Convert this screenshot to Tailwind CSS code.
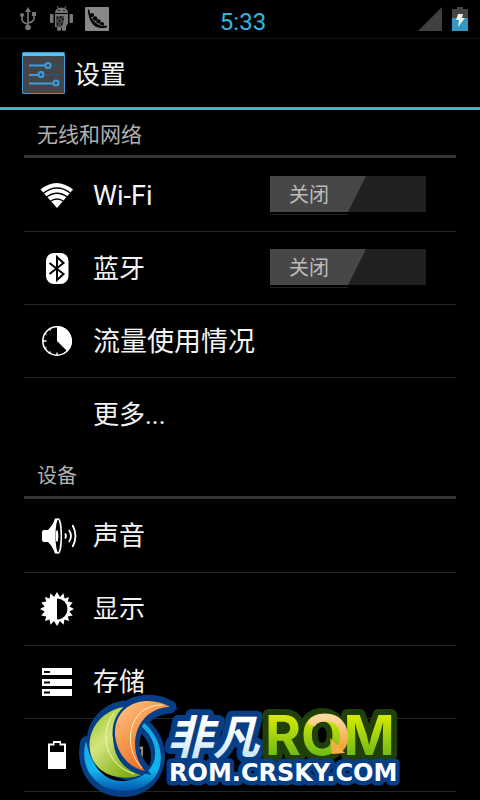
<!DOCTYPE html>
<html lang="zh-CN">
<head>
    <meta charset="UTF-8">
    <meta name="viewport" content="width=device-width, initial-scale=1.0">
    <title>设置</title>
    <script src="https://cdn.jsdelivr.net/npm/@tailwindcss/browser@4"></script>
</head>
<body class="bg-black text-[#f3f3f3] font-['Roboto','Noto_Sans_CJK_SC',sans-serif] overflow-hidden">
    <div class="relative h-screen overflow-hidden">
        <!-- Status bar -->
        <div class="relative flex h-[39px] items-center justify-between border-b border-[#111] pl-[18px] pr-3">
            <div class="flex items-center gap-3">
                <svg class="h-6 w-5" viewBox="0 0 20 24" fill="none" stroke="#777" stroke-width="1.6">
                    <path d="M10 3v17M10 17q-6-1-6-5V8M10 16q6-1 6-5V7"/>
                    <path d="M10 0l3 5H7z" fill="#777" stroke="none"/>
                    <circle cx="10" cy="20.500" r="2.800" fill="#777" stroke="none"/>
                    <circle cx="4" cy="8" r="2" fill="#777" stroke="none"/>
                    <path d="M14 5h4v4h-4z" fill="#777" stroke="none"/>
                </svg>
                <svg class="h-[26px] w-[23px]" viewBox="0 0 23 26" fill="#777">
                    <path d="M5 7a6.500 5.500 0 0 1 13 0z"/>
                    <path d="M7 0l2 3M16 0l-2 3" stroke="#777"/>
                    <rect x="0" y="8" width="3.500" height="9" rx="1"/>
                    <rect x="19.500" y="8" width="3.500" height="9" rx="1"/>
                    <path d="M5 8h13v9l-2 4v3q-2 2-4 0v-2h-1v2q-2 2-4 0v-3H5z"/>
                    <path d="M6 10h8v5l-2 6H7l-1-2z" fill="#444"/>
                    <path d="M7 11h1.500v2H7zM10 10h1.500v2H10zM9 14h1.500v2H9zM12 12h1.500v2H12zM11 17h1.500v2H11zM7 17h1.500v2H7z" fill="#111"/>
                    <circle cx="9" cy="4.500" r="0.800" fill="#000"/>
                    <circle cx="14" cy="4.500" r="0.800" fill="#000"/>
                </svg>
                <svg class="h-6 w-6" viewBox="0 0 24 24">
                    <rect width="24" height="24" rx="1" fill="#8a878a"/>
                    <path d="M3.500 2.500C2.500 12 8 21 16 21Q20 21.500 22 19.500Q17 20 12 17Q6 12 3.500 2.500z" fill="#000"/>
                    <path d="M3.500 2.500Q4 10 10 15.500Q15 20 22 19.500" fill="none" stroke="#000" stroke-width="1.500"/>
                    <circle cx="7" cy="8" r="2" fill="#000"/>
                    <circle cx="10" cy="11.500" r="2.300" fill="#000"/>
                    <circle cx="13.500" cy="14.500" r="2.300" fill="#000"/>
                    <circle cx="17" cy="17" r="2" fill="#000"/>
                    <path d="M6 10q4 7 12 9" fill="none" stroke="#8a878a" stroke-width="0.700"/>
                </svg>
            </div>
            <time class="absolute inset-x-0 top-[7px] pl-[6px] text-center text-[24px] leading-[30px] text-[#33b5e5]">5:33</time>
            <div class="flex items-center gap-[10px]">
                <svg class="h-6 w-6" viewBox="0 0 24 24"><path d="M24 0v24H0z" fill="#404040"/></svg>
                <svg class="h-6 w-4" viewBox="0 0 16 24">
                    <path d="M5 0h6v2h5v10H0V2h5z" fill="#444"/>
                    <path d="M0 11h16v13H0z" fill="#3397bf"/>
                    <path d="M6 7h5l-1 4h3l-7 9 1-7H4z" fill="#eee"/>
                </svg>
            </div>
        </div>

        <!-- Action bar -->
        <header class="flex h-[71px] items-center gap-[9px] border-b-3 border-[#33b5e5] pl-[22px]">
            <svg class="h-[42px] w-[43px]" viewBox="0 0 43 42">
                <rect width="43" height="42" rx="1.500" fill="#3b9ad3"/>
                <rect x="1" y="4" width="41" height="37" fill="#434548"/>
                <path d="M1 1h41v3H1z" fill="#55c4ed"/>
                <path d="M7 13.500h30M7 23h30" stroke="#285677" stroke-width="1.500"/>
                <path d="M7 13.500h18M7 23h11M7 31.500h26" stroke="#3b9de0" stroke-width="2"/>
                <g fill="#444" stroke="#3b9de0" stroke-width="2">
                    <circle cx="26" cy="13.500" r="2.500"/>
                    <circle cx="19" cy="22.500" r="2.500"/>
                    <circle cx="34" cy="31" r="2.500"/>
                </g>
            </svg>
            <h1 class="pt-1 text-[26px] leading-[34px]">设置</h1>
        </header>

        <main class="px-6">
            <!-- Wireless & networks -->
            <h2 class="mb-px h-12 border-b-3 border-[#333] pl-[13px] pt-[10px] text-[21px] leading-[30px] text-[#b0b0b0]">无线和网络</h2>
            <ul>
                <li class="flex h-[73px] items-center border-b border-[#262626] pl-4 pr-[30px]">
                    <svg class="mr-[19px] h-[34px] w-[34px]" viewBox="0 0 34 34">
                        <path d="M0.500 11.500Q16.500-1.500 33 11.500L17 30z" fill="#fff"/>
                        <path d="M3 15.500Q17 4.500 31 15.500M6 19.500Q17 11 28 19.500M10 23.500Q17 18.500 24 23.500" fill="none" stroke="#000" stroke-width="1.500"/>
                    </svg>
                    <label for="wifi" class="flex-1 pt-0.5 text-[27px] leading-[36px]">Wi-Fi</label>
                    <button id="wifi" role="switch" aria-checked="false" class="relative mb-0.5 h-9 w-[156px] bg-[#202020] text-left">
                        <svg class="absolute left-0 top-0 h-[39px] w-24" viewBox="0 0 96 39"><path d="M0 0h96L78 36H0z" fill="#474747"/><path d="M0 38.500h78" stroke="#202020"/></svg>
                        <span class="relative pl-[19px] text-[20px] leading-[38px] text-[#bbb]">关闭</span>
                    </button>
                </li>
                <li class="flex h-[73px] items-center border-b border-[#262626] pl-4 pr-[30px]">
                    <svg class="mr-[19px] h-[34px] w-[34px]" viewBox="0 0 34 34">
                        <rect x="6" y="2" width="22.500" height="31" rx="8" fill="#fff"/>
                        <path d="M9.500 12l14 11-6.500 6V6l6.500 6-14 11" fill="none" stroke="#000" stroke-width="2"/>
                    </svg>
                    <label for="bluetooth" class="flex-1 pt-0.5 text-[26px] leading-[36px]">蓝牙</label>
                    <button id="bluetooth" role="switch" aria-checked="false" class="relative mb-0.5 h-9 w-[156px] bg-[#202020] text-left">
                        <svg class="absolute left-0 top-0 h-[39px] w-24" viewBox="0 0 96 39"><path d="M0 0h96L78 36H0z" fill="#474747"/><path d="M0 38.500h78" stroke="#202020"/></svg>
                        <span class="relative pl-[19px] text-[20px] leading-[38px] text-[#bbb]">关闭</span>
                    </button>
                </li>
                <li class="flex h-[73px] items-center border-b border-[#262626] pl-4">
                    <svg class="mr-[19px] h-[34px] w-[34px]" viewBox="0 0 34 34">
                        <circle cx="17" cy="17" r="14.200" fill="#000" stroke="#fff" stroke-width="1.600"/>
                        <path d="M17 17V2a15 15 0 0 1 10.500 25.500z" fill="#fff"/>
                        <path d="M3 17h3.500M17 28.500v3M9.500 4.500l1 2M4.500 9.500l2 1M4.500 24.500l2-1M9.500 29.500l1-2" stroke="#fff" stroke-width="1.300"/>
                    </svg>
                    <span class="pt-0.5 text-[27px] leading-[36px]">流量使用情况</span>
                </li>
                <li class="flex h-[73px] items-center pl-[69px]">
                    <span class="text-[26px] leading-[36px]">更多...</span>
                </li>
            </ul>

            <!-- Device -->
            <h2 class="mb-px h-12 border-b-3 border-[#333] pl-[13px] pt-[10px] text-[20px] leading-[30px] text-[#b0b0b0]">设备</h2>
            <ul>
                <li class="flex h-[73px] items-center border-b border-[#262626] pl-4">
                    <svg class="mr-[19px] h-9 w-[34px] overflow-visible" viewBox="0 0 34 36">
                        <path d="M2 14q0-2 2-2h4q5-5 7-11.500h3v35h-3q-2-6.500-7-11.500H4q-2 0-2-2z" fill="#fff"/>
                        <ellipse cx="18" cy="18" rx="3.300" ry="17" fill="#000" stroke="#fff" stroke-width="1.500"/>
                        <ellipse cx="17" cy="18" rx="1.300" ry="6" fill="#fff"/>
                        <path d="M25 15.500q2 2.500 0 5M29 12q4 6 0 12M32.500 7q6 11 0 22" fill="none" stroke="#fff" stroke-width="1.800"/>
                    </svg>
                    <span class="text-[26px] leading-[36px]">声音</span>
                </li>
                <li class="flex h-[73px] items-center border-b border-[#262626] pl-4">
                    <svg class="mr-[19px] h-[34px] w-[34px]" viewBox="-17 -17 34 34">
                        <path d="M0-17L3-12 6.500-15.700 7.500-10.400 12-12 10.800-7.500 15.700-6.500 12.400-2.500 17 0 12.400 2.500 15.700 6.500 10.800 7.500 12 12 7.500 10.400 6.500 15.700 3 12 0 17-3 12-6.500 15.700-7.500 10.400-12 12-10.800 7.500-15.700 6.500-12.400 2.500-17 0-12.400-2.500-15.700-6.500-10.800-7.500-12-12-7.500-10.400-6.500-15.700-3-12z" fill="#fff"/>
                        <path d="M0-10.500a10.500 10.500 0 0 1 0 21z" fill="#000"/>
                    </svg>
                    <span class="text-[26px] leading-[36px]">显示</span>
                </li>
                <li class="flex h-[73px] items-center border-b border-[#262626] pl-4">
                    <svg class="mr-[19px] h-[34px] w-[34px]" viewBox="0 0 34 34">
                        <path d="M2 3h30v7H2zM2 14h30v7H2zM2 24h30v7H2z" fill="#fff"/>
                        <path d="M4 7h6M4 17.500h6M4 27.500h6" stroke="#000" stroke-width="2"/>
                    </svg>
                    <span class="text-[26px] leading-[36px]">存储</span>
                </li>
                <li class="flex h-[73px] items-center border-b border-[#262626] pl-4">
                    <svg class="mr-[19px] h-[34px] w-[34px]" viewBox="0 0 34 34">
                        <path d="M8 5.500h5V3h8v2.500h5V31H8z" fill="#fff"/>
                        <path d="M10 7.500h4.500V5h5v2.500H24V14H10z" fill="#000"/>
                    </svg>
                    <span class="text-[26px] leading-[36px] text-[#999]">电池</span>
                </li>
            </ul>
        </main>

        <!-- Site logo over the list -->
        <a href="#" aria-label="非凡ROM" class="absolute bottom-0 left-[76px] block">
            <svg class="h-[110px] w-[330px]" viewBox="76 690 330 110">
                <defs>
                    <linearGradient id="orange" x1="0" y1="0" x2="0.700" y2="1"><stop offset="0" stop-color="#ffc98a"/><stop offset="0.500" stop-color="#f6954a"/><stop offset="1" stop-color="#e8601a"/></linearGradient>
                    <linearGradient id="green" x1="0" y1="0" x2="0.700" y2="1"><stop offset="0" stop-color="#8fc31f"/><stop offset="0.450" stop-color="#d3e57f"/><stop offset="1" stop-color="#7fae12"/></linearGradient>
                    <linearGradient id="blue" x1="0" y1="0" x2="0" y2="1"><stop offset="0" stop-color="#10a9e4"/><stop offset="0.700" stop-color="#12b4ec"/><stop offset="1" stop-color="#0555ad"/></linearGradient>
                    <linearGradient id="ice" x1="0" y1="0" x2="0" y2="1"><stop offset="0.400" stop-color="#fff"/><stop offset="1" stop-color="#b5ddf7"/></linearGradient>
                    <linearGradient id="lime" x1="0" y1="0" x2="0" y2="1"><stop offset="0.200" stop-color="#d7ea00"/><stop offset="0.900" stop-color="#5fb51c"/></linearGradient>
                    <linearGradient id="arrow" x1="0" y1="0" x2="0" y2="1"><stop offset="0" stop-color="#fbd9a0"/><stop offset="1" stop-color="#f0a030"/></linearGradient>
                </defs>
                <g fill="none" stroke="#063f86" stroke-linecap="round" stroke-linejoin="round">
                    <path d="M87 743C82 770 99 790 123 790C158 790 170 750 144 726" stroke-width="14"/>
                    <path d="M124 707C81 715 81 774 140 775C112 762 104 733 124 707z" stroke-width="13" fill="#063f86"/>
                    <path d="M170 707C148 695 116 701 116 734C118 755 130 768 145 771C120 748 137 709 170 707z" stroke-width="13" fill="#063f86"/>
                </g>
                <path d="M86 741C78 770 98 791 123 791C166 791 172 746 143 722L141 726C167 748 155 780 124 781C104 782 91 766 86 741z" fill="url(#blue)"/>
                <path d="M124 707C81 714 77 772 119 777Q131 779 141 775C112 767 105 735 124 707z" fill="url(#green)"/>
                <path d="M170 707C148 694 114 702 115 735C117 755 130 768 145 771C125 748 136 708 170 707z" fill="url(#orange)" stroke="#063f86" stroke-width="5" paint-order="stroke"/>
                <path d="M114 713C97 736 108 766 134 774M163 705C127 704 122 748 142 768" fill="none" stroke="#fff3bd" stroke-width="1"/>
                <g stroke-linejoin="round" paint-order="stroke">
                    <text x="167" y="754" font-family="Noto Sans CJK SC" font-weight="700" font-style="italic" font-size="46" fill="url(#ice)" stroke="#063f86" stroke-width="12">非凡</text>
                    <text x="265" y="755" font-family="Inter" font-weight="700" font-size="55" fill="url(#lime)" stroke="#214008" stroke-width="12">ROM</text>
                    <text x="169" y="781" font-family="DejaVu Sans" font-weight="700" font-size="24" fill="#fff" stroke="#063f86" stroke-width="9">ROM.CRSKY.COM</text>
                </g>
                <path d="M311 725C317 713 344 714 344 737Q344 745 339 749" fill="none" stroke="url(#arrow)" stroke-width="8"/>
                <path d="M330 738l15 15-13 1z" fill="#f3ad48"/>
            </svg>
        </a>
    </div>
</body>
</html>
